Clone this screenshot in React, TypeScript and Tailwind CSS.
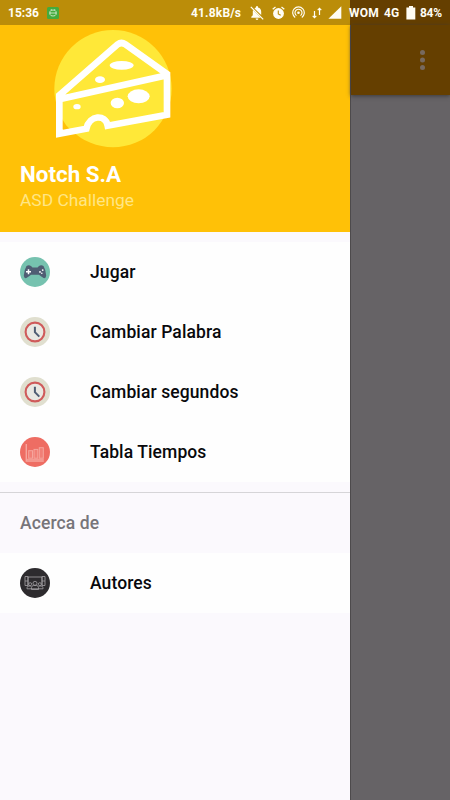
import React from 'react';

function Cheese() {
  return (
    <svg className="ml-10 block h-[130px] w-[150px]" viewBox="0 15 450 390">
      <circle cx="219" cy="206" r="176" fill="#ffe838" />
      <path d="M66 300 Q73 316 89 328 L66 332Z" fill="#ffc107" />
      <path
        d="M58 226 L233 73 Q244 65 256 73 L381 162 V284 L203 317 C196 282 149 284 139 326 L58 341 Z"
        fill="#ffe838"
      />
      <path d="M66 296 Q76 316 94 332 L66 336Z" fill="#ffc107" />
      <path
        d="M58 226 L233 73 Q244 65 256 73 L381 162 V284 L203 317 C196 282 149 284 139 326 L58 341 Z M58 238 L381 166"
        fill="none" stroke="#fff" strokeWidth="20" strokeLinejoin="miter"
      />
      <g fill="#fff">
        <ellipse cx="245" cy="136" rx="36" ry="13" />
        <ellipse cx="180" cy="179" rx="15" ry="10" />
        <ellipse cx="111" cy="260" rx="11" ry="8" />
        <ellipse cx="232" cy="249" rx="20" ry="16" />
        <ellipse cx="296" cy="229" rx="33" ry="21" />
      </g>
    </svg>
  );
}

function Gamepad() {
  return (
    <svg className="size-[30px]" viewBox="0 0 30 30">
      <circle cx="15" cy="15" r="15" fill="#76c2af" />
      <path d="M6.5 8.9 Q9 7.6 11 9 L12.5 10.4 H17.5 L19 9 Q21 7.6 23.5 8.9 Q26 13 26.2 18.5 Q26 21.8 23.6 21 Q20.5 19.3 19 17.8 H11 Q9.5 19.3 6.4 21 Q4 21.8 3.8 18.5 Q4 13 6.5 8.9Z" fill="#4f5d73" />
      <path d="M8.5 12.2v5M6 14.7h5" stroke="#fff" strokeWidth="1.5" />
      <g fill="#fff">
        <circle cx="22.7" cy="13.1" r=".9" />
        <circle cx="20" cy="14.9" r=".9" />
        <circle cx="21.8" cy="16.2" r=".8" />
      </g>
    </svg>
  );
}

function Clock() {
  return (
    <svg className="size-[30px]" viewBox="0 0 30 30">
      <circle cx="15" cy="15" r="15" fill="#e0dfcf" />
      <circle cx="15" cy="15" r="9.4" fill="#e9e8e2" stroke="#cf5b5b" strokeWidth="2.1" />
      <path d="M14.9 9.8V15.2L19.3 19.6" fill="none" stroke="#4f5d73" strokeWidth="2" />
    </svg>
  );
}

function Bars() {
  return (
    <svg className="size-[30px]" viewBox="0 0 30 30">
      <circle cx="15" cy="15" r="15" fill="#ee6d63" />
      <g fill="#f17f76" stroke="#f6a59d" strokeWidth="1">
        <path d="M6.3 7v17h17.5" fill="none" strokeWidth="1.4" />
        <rect x="8.7" y="13.7" width="3.8" height="7.5" />
        <rect x="14" y="12.4" width="3.8" height="8.8" />
        <rect x="19.3" y="10.7" width="4" height="10.5" />
        <path d="M6.5 22.3h17.3" />
      </g>
    </svg>
  );
}

function People() {
  return (
    <svg className="size-[30px]" viewBox="0 0 30 30">
      <circle cx="15" cy="15" r="15" fill="#2d2b2e" />
      <g fill="none" stroke="#a3a1a5" strokeWidth=".8">
        <path d="M8 17.5V9h14v8.5M5 8.5h3v9H5zM22 8.5h3v9h-3zM5 13h3M22 13h3" />
        <circle cx="15" cy="15.3" r="2" />
        <circle cx="10.2" cy="16.2" r="1.5" />
        <circle cx="19.8" cy="16.2" r="1.5" />
        <path d="M11.5 21.5v-2q0-2 2-2h3q2 0 2 2v2zM7 20.8v-1q0-1.6 2-1.8h2M23 20.8v-1q0-1.6-2-1.8h-2M7 20.8h16" />
      </g>
    </svg>
  );
}

function Item({ icon, label }: { icon: React.ReactNode; label: string }) {
  return (
    <li className="flex h-[60px] items-center px-5">
      <span className="w-[70px] shrink-0">{icon}</span>
      <span className="pt-px text-[17.5px] leading-6 font-medium tracking-[0.1px] whitespace-nowrap text-[#09090c]">{label}</span>
    </li>
  );
}

function StatusBar() {
  return (
    <header className="flex h-[25px] items-center bg-[linear-gradient(to_right,#bb8d09_350px,#653f00_350px)] text-[12px] leading-none font-bold whitespace-nowrap text-[#fffdf4]">
      <span className="ml-2 w-[39px] pt-px">15:36</span>
      <svg className="size-[12px]" viewBox="0 0 12 12">
        <rect width="12" height="12" rx="1.5" fill="#43ab3d" />
        <path d="M3 4.5Q3.4 3 6 3t3 1.5v3Q8.5 9 6 9T3 7.5zM2.2 6h7.6M4 2.2l.8 1M8 2.2l-.8 1" fill="none" stroke="#dff2dc" strokeWidth=".8" />
      </svg>
      <span className="ml-[132px] w-[59px] tracking-[0.17px]">41.8kB/s</span>
      <svg className="h-[16px] w-[14px]" viewBox="0 0 14 16" fill="currentColor">
        <path d="M3.1 5.1 10.7 12.8H1.3v-1l1.5-1.5V6.8q0-1 .3-1.7M4.5 3.4q.7-.6 1.5-.8v-.5a1 1 0 0 1 2 0v.5q3.2.9 3.2 4.2v3.1zM5.6 13.5h2.8a1.4 1.4 0 0 1-2.8 0" />
        <path d="m.8 1.8 12.4 12.5" stroke="currentColor" strokeWidth="1.2" />
      </svg>
      <svg className="ml-2 h-[14px] w-[13px]" viewBox="0 0 13 14">
        <circle cx="6.5" cy="7.5" r="5.4" fill="currentColor" />
        <path d="m.7 3.3 2.8-2.2M12.3 3.3 9.5 1.1" stroke="currentColor" strokeWidth="1.3" />
        <path d="M6.3 4.5v3.4l2.4 1.4" fill="none" stroke="#bb8d09" strokeWidth="1.1" />
      </svg>
      <svg className="ml-[7px] h-[13px] w-[13px]" viewBox="0 0 13 13" fill="none" stroke="currentColor" strokeWidth="1.15">
        <path d="M3.2 11.5A5.8 5.8 0 1 1 9.8 11.5M4.5 9.6A3.5 3.5 0 1 1 8.5 9.6" />
        <circle cx="6.5" cy="6.7" r="1.3" fill="currentColor" stroke="none" />
      </svg>
      <svg className="ml-[7px] h-[12px] w-[10px]" viewBox="0 0 10 12" fill="none" stroke="currentColor" strokeWidth="1.2">
        <path d="M2.5 4v6.7M.7 8.9l1.8 1.8 1.8-1.8M7.5 8V1.3M5.7 3.1l1.8-1.8 1.8 1.8" />
      </svg>
      <svg className="ml-[6px] h-[13px] w-[14px]" viewBox="0 0 14 13">
        <path d="M13.3.3v12.4H.4z" fill="currentColor" />
      </svg>
      <span className="ml-[7px] w-[35px] tracking-[0.2px]">WOM</span>
      <span className="w-[22px]">4G</span>
      <svg className="h-[15px] w-[10px]" viewBox="0 0 10 15">
        <path d="M3 1h4v1.5h2.3v12H.4v-12H3z" fill="currentColor" />
      </svg>
      <span className="ml-[4px] tracking-[-0.3px]">84%</span>
    </header>
  );
}

export default function App() {
  return (
    <div className="flex h-[800px] w-[450px] flex-col overflow-hidden font-['Roboto','Noto_Sans',sans-serif]">
      <StatusBar />
      <div className="flex flex-1">
        <aside className="w-[350px] bg-[#fbf9fd]">
          <section className="h-[206.5px] bg-[#ffc107]">
            <Cheese />
            <h1 className="ml-5 pt-[5px] text-[22.4px] leading-[28px] font-bold text-white">Notch S.A</h1>
            <p className="ml-5 text-[17.4px] leading-[25px] text-[#ffe685]">ASD Challenge</p>
          </section>
          <ul className="mt-[10px] bg-[#fefefe]">
            <Item icon={<Gamepad />} label="Jugar" />
            <Item icon={<Clock />} label="Cambiar Palabra" />
            <Item icon={<Clock />} label="Cambiar segundos" />
            <Item icon={<Bars />} label="Tabla Tiempos" />
          </ul>
          <div className="mt-[10px] h-px bg-[#d6d5d8]" />
          <h2 className="flex h-[60px] items-center pt-[2px] pl-5 text-[17.5px] font-medium tracking-[0.1px] text-[#77757a]">Acerca de</h2>
          <ul className="bg-[#fefefe]">
            <Item icon={<People />} label="Autores" />
          </ul>
        </aside>
        <main className="flex-1 border-l border-[#4d4a4c] bg-[#666366]">
          <div className="flex h-[70px] justify-end bg-[#653f00] pt-[25px] pr-[25px] shadow-[0_1px_4px_#3b393b]">
            <svg className="h-[20px] w-[5px]" viewBox="0 0 5 20" fill="#77695e">
              <circle cx="2.5" cy="2.5" r="2.5" />
              <circle cx="2.5" cy="10" r="2.5" />
              <circle cx="2.5" cy="17.5" r="2.5" />
            </svg>
          </div>
        </main>
      </div>
    </div>
  );
}
